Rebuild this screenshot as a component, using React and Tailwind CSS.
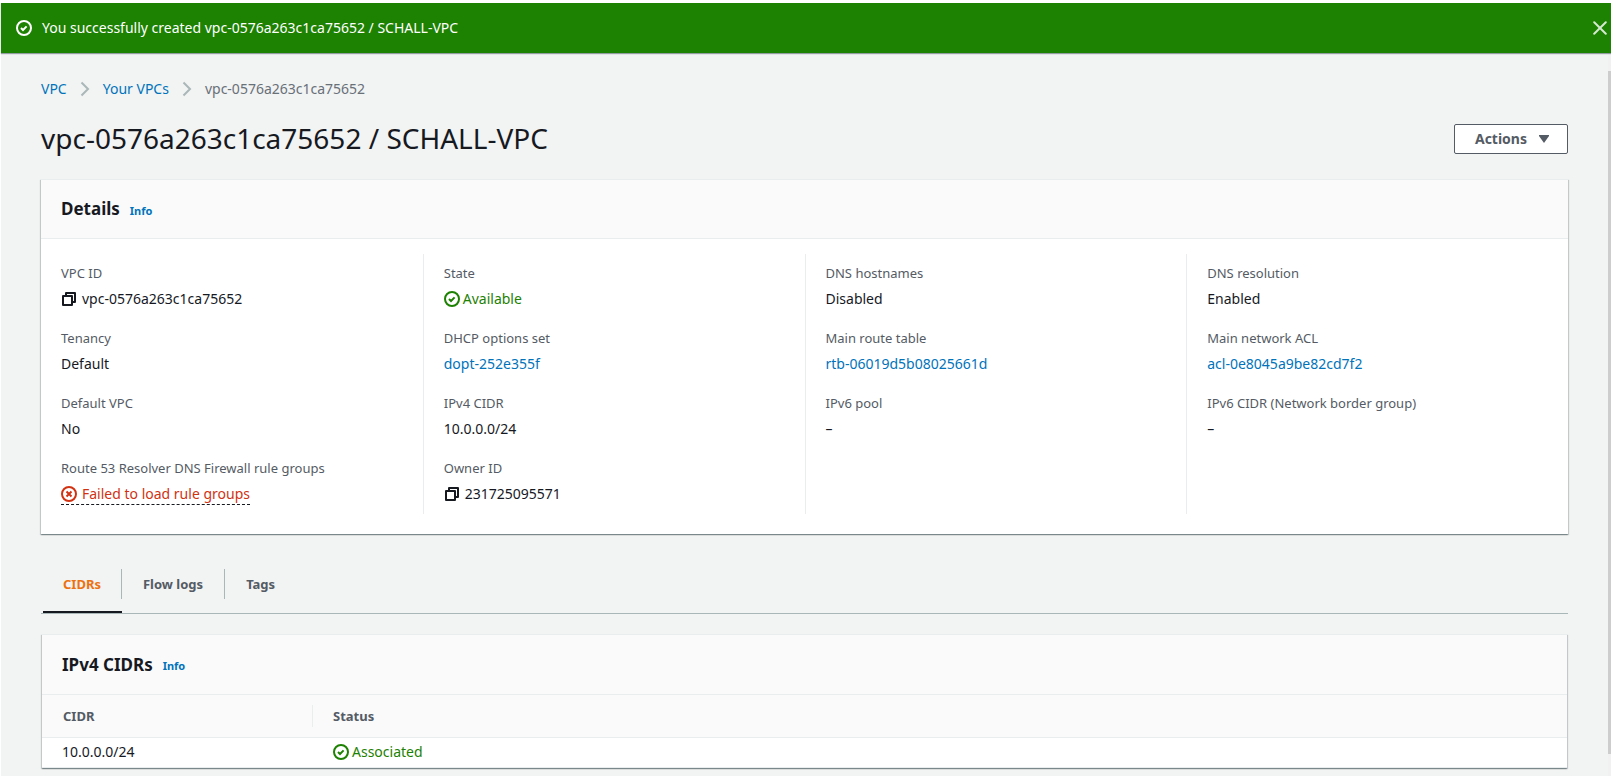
import React from "react";

const CheckIcon = ({ className }) => (
  <svg viewBox="0 0 16 16" className={className} fill="none" stroke="currentColor" strokeWidth="2" aria-hidden="true">
    <circle cx="8" cy="8" r="7" />
    <path d="M5 8l2 2 3.6-3.6" />
  </svg>
);

const ErrorIcon = ({ className }) => (
  <svg viewBox="0 0 16 16" className={className} fill="none" stroke="currentColor" strokeWidth="2" aria-hidden="true">
    <circle cx="8" cy="8" r="7" />
    <path d="M5.5 5.5l5 5M10.5 5.5l-5 5" />
  </svg>
);

const CopyIcon = () => (
  <svg viewBox="0 0 16 16" className="h-4 w-4" fill="none" stroke="currentColor" strokeWidth="2" strokeLinejoin="round" aria-hidden="true">
    <path d="M2 5h9v9H2z" />
    <path d="M5 5V2h9v9h-3" />
  </svg>
);

const Chevron = () => (
  <svg viewBox="0 0 10 16" className="mx-[13px] h-4 w-[10px] text-[#aab7b8]" fill="none" stroke="currentColor" strokeWidth="2" aria-hidden="true">
    <path d="M1.5 1.5L8 8l-6.5 6.5" />
  </svg>
);

const link = "text-[#0073bb] hover:underline";

const Status = ({ children }) => (
  <span className="flex items-center gap-[3px] text-[#1d8102]">
    <CheckIcon className="h-4 w-4" />
    {children}
  </span>
);

const Copyable = ({ children }) => (
  <span className="flex items-center gap-[5px]">
    <button type="button" aria-label="Copy">
      <CopyIcon />
    </button>
    {children}
  </span>
);

const columns = [
  [
    ["VPC ID", <Copyable>vpc-0576a263c1ca75652</Copyable>],
    ["Tenancy", "Default"],
    ["Default VPC", "No"],
    [
      "Route 53 Resolver DNS Firewall rule groups",
      <button type="button" className="flex items-center gap-[5px] border-b border-dashed border-[#16191f] text-[#d13212]">
        <ErrorIcon className="h-4 w-4" />
        Failed to load rule groups
      </button>,
    ],
  ],
  [
    ["State", <Status>Available</Status>],
    ["DHCP options set", <a href="#dhcp" className={link}>dopt-252e355f</a>],
    ["IPv4 CIDR", "10.0.0.0/24"],
    ["Owner ID", <Copyable>231725095571</Copyable>],
  ],
  [
    ["DNS hostnames", "Disabled"],
    ["Main route table", <a href="#route-table" className={link}>rtb-06019d5b08025661d</a>],
    ["IPv6 pool", "–"],
  ],
  [
    ["DNS resolution", "Enabled"],
    ["Main network ACL", <a href="#acl" className={link}>acl-0e8045a9be82cd7f2</a>],
    ["IPv6 CIDR (Network border group)", "–"],
  ],
];

const card = "bg-white shadow-[0_1px_1px_0_rgba(0,28,36,0.3),1px_1px_1px_0_rgba(0,28,36,0.15),-1px_1px_1px_0_rgba(0,28,36,0.15)] border-t border-[#eaeded]";

const CardHeader = ({ title, height }) => (
  <div className={`flex items-center gap-[10px] border-b border-[#eaeded] bg-[#fafafa] px-5 ${height}`}>
    <h2 className="text-[17px] leading-6 font-bold">{title}</h2>
    <a href="#info" className="pt-[3px] text-[11px] leading-4 font-bold text-[#0073bb]">Info</a>
  </div>
);

export default function App() {
  return (
    <div className="flex min-h-screen flex-col bg-white pt-[3px] pl-px font-['Noto_Sans',sans-serif] text-[14px] leading-[22px] text-[#16191f]">
      <div role="status" className="z-10 flex h-[50px] items-center bg-[#1d8102] pr-1 pl-[15px] text-white shadow-[0_1px_1px_0_rgba(0,28,36,0.4)]">
        <CheckIcon className="mr-[10px] h-4 w-4" />
        <span className="grow">You successfully created vpc-0576a263c1ca75652 / SCHALL-VPC</span>
        <button type="button" aria-label="Dismiss">
          <svg viewBox="0 0 14 14" className="h-[14px] w-[14px]" fill="none" stroke="#d5e8d0" strokeWidth="2" strokeLinecap="round" aria-hidden="true">
            <path d="M1.2 1.2l11.6 11.6M12.8 1.2L1.2 12.8" />
          </svg>
        </button>
      </div>
      <div className="flex grow bg-[#f2f3f3]">
        <main className="min-w-0 flex-1 pt-[25px] pr-10 pl-10">
          <nav aria-label="Breadcrumb" className="flex items-center">
            <a href="#vpc" className={link}>VPC</a>
            <Chevron />
            <a href="#vpcs" className={link}>Your VPCs</a>
            <Chevron />
            <span className="text-[#687078]">vpc-0576a263c1ca75652</span>
          </nav>
          <div className="mt-[21px] flex items-center justify-between">
            <h1 className="pb-[2px] text-[28px] leading-[34px]">vpc-0576a263c1ca75652 / SCHALL-VPC</h1>
            <button type="button" className="flex h-[30px] items-center gap-3 rounded-[2px] border border-[#545b64] bg-white pr-[18px] pl-5 font-bold text-[#545b64]">
              Actions
              <svg viewBox="0 0 10 8" className="h-2 w-[10px]" fill="currentColor" aria-hidden="true">
                <path d="M0 0h10v1L5 8 0 1z" />
              </svg>
            </button>
          </div>

          <section className={`${card} mt-[22px]`}>
            <CardHeader title="Details" height="h-[59px]" />
            <div className="grid grid-cols-4 pt-[15px] pb-5">
              {columns.map((fields, i) => (
                <dl key={i} className={`flex flex-col gap-[17px] pt-2 pb-[9px] pl-5 ${i ? "border-l border-[#eaeded]" : ""}`}>
                  {fields.map(([label, value]) => (
                    <div key={label}>
                      <dt className="text-[13px] text-[#545b64]">{label}</dt>
                      <dd className="mt-1 flex h-[22px]">{value}</dd>
                    </div>
                  ))}
                </dl>
              ))}
            </div>
          </section>

          <div role="tablist" className="mt-[29px] flex border-b border-[#aab7b8] pl-[2px] text-[13px] font-bold text-[#545b64]">
            <button type="button" role="tab" aria-selected="true" className="border-b-2 border-[#16191f] text-[#ec7211]">
              <span className="mt-[6px] mb-3 block border-r border-[#aab7b8] px-5 py-1">CIDRs</span>
            </button>
            <button type="button" role="tab" aria-selected="false" className="border-b-2 border-transparent">
              <span className="mt-[6px] mb-3 block border-r border-[#aab7b8] px-[21px] py-1">Flow logs</span>
            </button>
            <button type="button" role="tab" aria-selected="false" className="border-b-2 border-transparent">
              <span className="mt-[6px] mb-3 block px-[21px] py-1">Tags</span>
            </button>
          </div>

          <section className={`${card} mx-px mt-5`}>
            <CardHeader title="IPv4 CIDRs" height="h-[60px]" />
            <table className="w-full table-fixed border-collapse text-left">
              <thead className="bg-[#fafafa] text-[13px] text-[#545b64]">
                <tr className="h-[42px] border-b border-[#eaeded]">
                  <th scope="col" className="w-[271px] p-0">
                    <div className="border-r border-[#eaeded] pl-[21px]">CIDR</div>
                  </th>
                  <th scope="col" className="p-0 pl-5">Status</th>
                </tr>
              </thead>
              <tbody>
                <tr className="h-[30px] border-b border-[#eaeded]">
                  <td className="p-0 pl-5">10.0.0.0/24</td>
                  <td className="p-0 pl-5"><Status>Associated</Status></td>
                </tr>
              </tbody>
            </table>
          </section>
        </main>
        <div className="flex w-[3px] shrink-0 flex-col bg-[#f1f1f1] pt-[18px] pb-[22px]" aria-hidden="true">
          <div className="grow bg-[#cdcdcd]" />
        </div>
      </div>
    </div>
  );
}
